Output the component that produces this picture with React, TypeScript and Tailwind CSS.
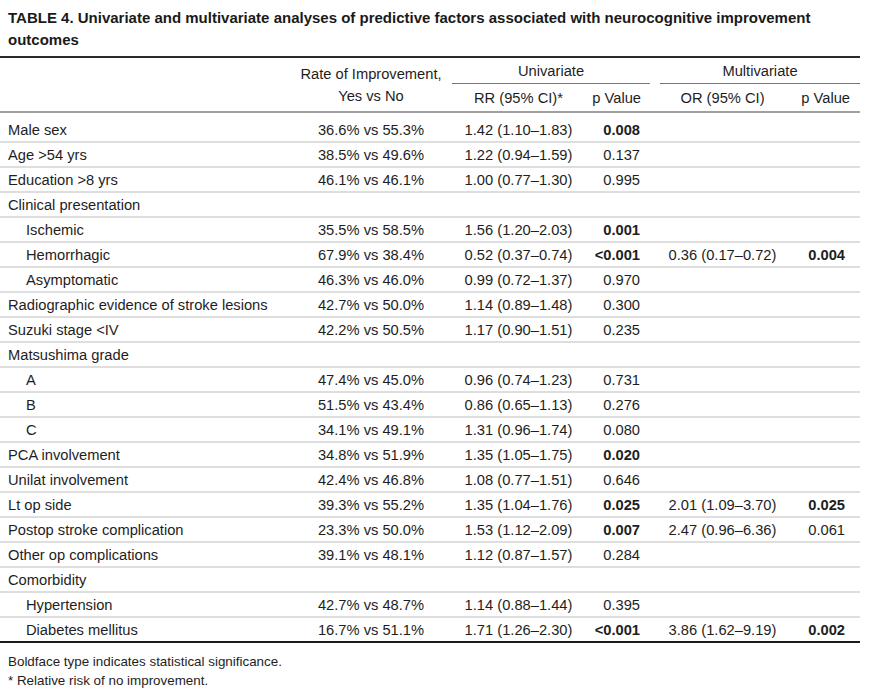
type Row = {
  label: string;
  sub?: boolean;
  rate?: string;
  rr?: string;
  p?: string;
  pBold?: boolean;
  or?: string;
  p2?: string;
  p2Bold?: boolean;
};

const rows: Row[] = [
  { label: "Male sex", rate: "36.6% vs 55.3%", rr: "1.42 (1.10–1.83)", p: "0.008", pBold: true },
  { label: "Age >54 yrs", rate: "38.5% vs 49.6%", rr: "1.22 (0.94–1.59)", p: "0.137" },
  { label: "Education >8 yrs", rate: "46.1% vs 46.1%", rr: "1.00 (0.77–1.30)", p: "0.995" },
  { label: "Clinical presentation" },
  { label: "Ischemic", sub: true, rate: "35.5% vs 58.5%", rr: "1.56 (1.20–2.03)", p: "0.001", pBold: true },
  {
    label: "Hemorrhagic",
    sub: true,
    rate: "67.9% vs 38.4%",
    rr: "0.52 (0.37–0.74)",
    p: "<0.001",
    pBold: true,
    or: "0.36 (0.17–0.72)",
    p2: "0.004",
    p2Bold: true,
  },
  { label: "Asymptomatic", sub: true, rate: "46.3% vs 46.0%", rr: "0.99 (0.72–1.37)", p: "0.970" },
  { label: "Radiographic evidence of stroke lesions", rate: "42.7% vs 50.0%", rr: "1.14 (0.89–1.48)", p: "0.300" },
  { label: "Suzuki stage <IV", rate: "42.2% vs 50.5%", rr: "1.17 (0.90–1.51)", p: "0.235" },
  { label: "Matsushima grade" },
  { label: "A", sub: true, rate: "47.4% vs 45.0%", rr: "0.96 (0.74–1.23)", p: "0.731" },
  { label: "B", sub: true, rate: "51.5% vs 43.4%", rr: "0.86 (0.65–1.13)", p: "0.276" },
  { label: "C", sub: true, rate: "34.1% vs 49.1%", rr: "1.31 (0.96–1.74)", p: "0.080" },
  { label: "PCA involvement", rate: "34.8% vs 51.9%", rr: "1.35 (1.05–1.75)", p: "0.020", pBold: true },
  { label: "Unilat involvement", rate: "42.4% vs 46.8%", rr: "1.08 (0.77–1.51)", p: "0.646" },
  {
    label: "Lt op side",
    rate: "39.3% vs 55.2%",
    rr: "1.35 (1.04–1.76)",
    p: "0.025",
    pBold: true,
    or: "2.01 (1.09–3.70)",
    p2: "0.025",
    p2Bold: true,
  },
  {
    label: "Postop stroke complication",
    rate: "23.3% vs 50.0%",
    rr: "1.53 (1.12–2.09)",
    p: "0.007",
    pBold: true,
    or: "2.47 (0.96–6.36)",
    p2: "0.061",
  },
  { label: "Other op complications", rate: "39.1% vs 48.1%", rr: "1.12 (0.87–1.57)", p: "0.284" },
  { label: "Comorbidity" },
  { label: "Hypertension", sub: true, rate: "42.7% vs 48.7%", rr: "1.14 (0.88–1.44)", p: "0.395" },
  {
    label: "Diabetes mellitus",
    sub: true,
    rate: "16.7% vs 51.1%",
    rr: "1.71 (1.26–2.30)",
    p: "<0.001",
    pBold: true,
    or: "3.86 (1.62–9.19)",
    p2: "0.002",
    p2Bold: true,
  },
];

export default function App() {
  return (
    <div
      className="w-[869px] h-[690px] bg-white text-[#1e1e1e] overflow-hidden"
      style={{ fontFamily: '"Liberation Sans", Arial, sans-serif' }}
    >
      {/* Caption */}
      <h1 className="pl-2 pt-[7px] pr-4 font-bold text-[15px] leading-[22px] text-[#1a1a1a]">
        TABLE 4. Univariate and multivariate analyses of predictive factors associated with neurocognitive improvement
        outcomes
      </h1>

      <table className="mt-[5px] w-[860px] border-collapse table-fixed text-[14.7px] leading-[22px]">
        <colgroup>
          <col className="w-[290px]" />
          <col className="w-[162px]" />
          <col className="w-[133px]" />
          <col className="w-[65px]" />
          <col className="w-[10px]" />
          <col className="w-[125px]" />
          <col className="w-[75px]" />
        </colgroup>
        <thead>
          <tr className="border-t-2 border-[#2a2a2a]">
            <th rowSpan={2} />
            <th rowSpan={2} className="font-normal text-center align-middle">
              Rate of Improvement,
              <br />
              Yes vs No
            </th>
            <th colSpan={2} className="h-[26px] p-0 font-normal align-top">
              <div className="mt-[2px] pb-[1px] border-b border-[#777] text-center">Univariate</div>
            </th>
            <th />
            <th colSpan={2} className="h-[26px] p-0 font-normal align-top">
              <div className="mt-[2px] pb-[1px] border-b border-[#777] text-center">Multivariate</div>
            </th>
          </tr>
          <tr className="border-b-2 border-[#a0a0a0]">
            <th className="h-[28px] font-normal text-center">RR (95% CI)*</th>
            <th className="pr-[9px] font-normal text-right">p Value</th>
            <th />
            <th className="font-normal text-center">OR (95% CI)</th>
            <th className="pr-[10px] font-normal text-right">p Value</th>
          </tr>
        </thead>
        <tbody>
          {rows.map((r, i) => {
            const first = i === 0;
            const cell = first ? "h-[30px] p-0 align-bottom" : "h-[25px] p-0";
            return (
              <tr
                key={r.label}
                className={
                  i === rows.length - 1 ? "border-b-2 border-[#1a1a1a]" : "border-b-2 border-[#dedede]"
                }
              >
                <td className={`${cell} whitespace-nowrap ${r.sub ? "pl-[26px]" : "pl-2"}`}>{r.label}</td>
                <td className={`${cell} text-center`}>{r.rate}</td>
                <td className={`${cell} text-center`}>{r.rr}</td>
                <td className={`${cell} pr-[10px] text-right ${r.pBold ? "font-bold" : ""}`}>{r.p}</td>
                <td className={cell} />
                <td className={`${cell} text-center`}>{r.or}</td>
                <td className={`${cell} pr-[15px] text-right ${r.p2Bold ? "font-bold" : ""}`}>{r.p2}</td>
              </tr>
            );
          })}
        </tbody>
      </table>

      {/* Footnotes */}
      <div className="pl-2 pt-[9px] text-[13.4px] leading-[19px]">
        <p>Boldface type indicates statistical significance.</p>
        <p>* Relative risk of no improvement.</p>
      </div>
    </div>
  );
}
